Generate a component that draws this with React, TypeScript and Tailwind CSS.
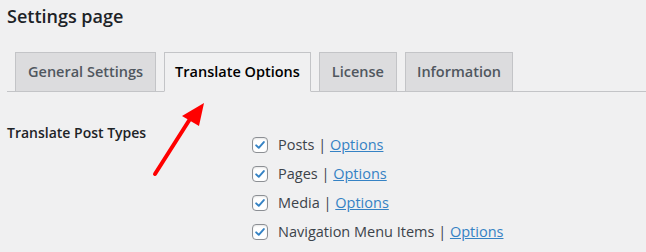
import React from "react";

const font = { fontFamily: '"Open Sans", "Noto Sans", sans-serif' };

function Check() {
  return (
    <span className="flex h-4 w-4 items-center justify-center rounded-[4px] border border-[#8c8f94] bg-white shadow-[inset_0_1px_2px_rgba(0,0,0,0.1)]">
      <svg width="14" height="14" viewBox="0 0 20 20">
        <path d="M4.5 10.5 L8.2 14 L15.5 5.8" fill="none" stroke="#3582c4" strokeWidth="2.8" strokeLinecap="round" strokeLinejoin="round" />
      </svg>
    </span>
  );
}

const items = ["Posts", "Pages", "Media", "Navigation Menu Items"];

export default function App() {
  return (
    <div className="relative h-[252px] w-[646px] overflow-hidden bg-[#f0f0f1] text-[#1d2327]" style={font}>
      <h1 className="pl-[7px] pt-[1px] text-[18px] font-semibold leading-[30px] text-[#1d2327]">Settings page</h1>
      <div className="mt-[21px] ml-[7px] flex items-end gap-2 border-b border-[#c3c4c7] pl-2">
        <div className="-mb-px flex h-[40px] items-center border border-[#c3c4c7] bg-[#dcdcde] px-3 text-[14.5px] font-semibold text-[#50575e]">General Settings</div>
        <div className="-mb-px flex h-[40px] items-center border border-[#c3c4c7] border-b-[#f0f0f1] bg-[#f0f0f1] px-[10px] text-[14.5px] font-semibold text-[#000]">Translate Options</div>
        <div className="-mb-px flex h-[40px] items-center border border-[#c3c4c7] bg-[#dcdcde] px-3 text-[14.5px] font-semibold text-[#50575e]">License</div>
        <div className="-mb-px flex h-[40px] items-center border border-[#c3c4c7] bg-[#dcdcde] px-[11px] text-[14.5px] font-semibold text-[#50575e]">Information</div>
      </div>
      <div className="mt-[29px] flex">
        <div className="w-[252px] pl-[7px] text-[14px] font-semibold leading-[24px] text-[#1d2327]">Translate Post Types</div>
        <div className="mt-[16px] flex flex-col gap-[13px]">
          {items.map((it) => (
            <div key={it} className="flex h-4 items-center gap-[10px] text-[14.5px] text-[#3c434a]">
              <Check />
              <span>
                {it} | <a className="text-[#3582c4] underline">Options</a>
              </span>
            </div>
          ))}
        </div>
      </div>
      <svg className="absolute left-0 top-0" width="646" height="252">
        <line x1="155" y1="174" x2="190" y2="119" stroke="#ff0000" strokeWidth="4" strokeLinecap="round" />
        <polygon points="204,103 182,116 199,126" fill="#ff0000" />
      </svg>
    </div>
  );
}
